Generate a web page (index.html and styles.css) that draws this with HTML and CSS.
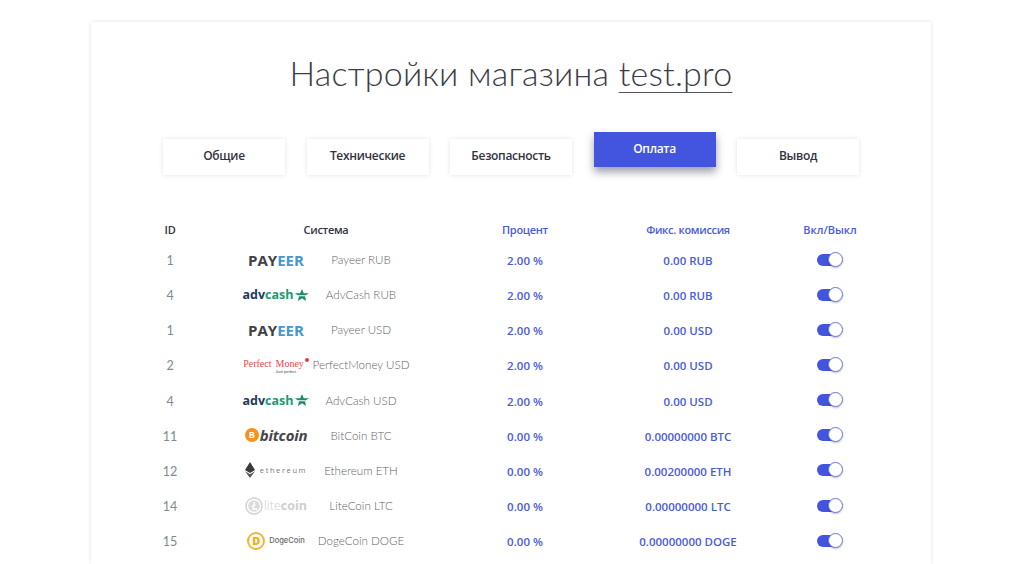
FILE: index.html
```html
<!DOCTYPE html>
<html lang="ru">
<head>
<meta charset="utf-8">
<title>Настройки магазина</title>
<link rel="stylesheet" href="styles.css">
</head>
<body>
<main class="card">
  <h1 class="title">Настройки магазина <a class="title-link">test.pro</a></h1>
  <nav class="tabs">
    <button class="tab">Общие</button>
    <button class="tab">Технические</button>
    <button class="tab">Безопасность</button>
    <button class="tab active">Оплата</button>
    <button class="tab">Вывод</button>
  </nav>
  <section class="table">
    <div class="row head">
      <div class="id-h">ID</div><div class="sys-h">Система</div><div class="blue">Процент</div><div class="blue">Фикс. комиссия</div><div class="blue light-h">Вкл/Выкл</div>
    </div>
    <div class="row">
      <div class="id">1</div>
      <div class="sys"><div class="logo payeer">PAY<span>EER</span></div><div class="name">Payeer RUB</div></div>
      <div class="val">2.00 %</div><div class="val">0.00 RUB</div><div class="sw"><span class="toggle"></span></div>
    </div>
    <div class="row">
      <div class="id">4</div>
      <div class="sys"><div class="logo adv">adv<span>cash</span><svg class="star" viewBox="0 0 14 12"><path d="M7 0l1.700 4.200H14l-3.200 2.100H2.600L0 4.200h5.200zM3.900 7.200h6.200L11 12 7 9.300 3 12z" fill="#1c8a6b"/></svg></div><div class="name">AdvCash RUB</div></div>
      <div class="val">2.00 %</div><div class="val">0.00 RUB</div><div class="sw"><span class="toggle"></span></div>
    </div>
    <div class="row">
      <div class="id">1</div>
      <div class="sys"><div class="logo payeer">PAY<span>EER</span></div><div class="name">Payeer USD</div></div>
      <div class="val">2.00 %</div><div class="val">0.00 USD</div><div class="sw"><span class="toggle"></span></div>
    </div>
    <div class="row">
      <div class="id">2</div>
      <div class="sys"><div class="logo pm"><span class="pm-word">Perfect</span><span class="pm-word">Money<small>Just perfect</small></span><i class="pm-dot"></i></div><div class="name">PerfectMoney USD</div></div>
      <div class="val">2.00 %</div><div class="val">0.00 USD</div><div class="sw"><span class="toggle"></span></div>
    </div>
    <div class="row">
      <div class="id">4</div>
      <div class="sys"><div class="logo adv">adv<span>cash</span><svg class="star" viewBox="0 0 14 12"><path d="M7 0l1.700 4.200H14l-3.200 2.100H2.600L0 4.200h5.200zM3.900 7.200h6.200L11 12 7 9.300 3 12z" fill="#1c8a6b"/></svg></div><div class="name">AdvCash USD</div></div>
      <div class="val">2.00 %</div><div class="val">0.00 USD</div><div class="sw"><span class="toggle"></span></div>
    </div>
    <div class="row">
      <div class="id">11</div>
      <div class="sys"><div class="logo btc"><span class="btc-icon">B</span><span class="btc-word">bitcoin</span></div><div class="name">BitCoin BTC</div></div>
      <div class="val">0.00 %</div><div class="val">0.00000000 BTC</div><div class="sw"><span class="toggle"></span></div>
    </div>
    <div class="row">
      <div class="id">12</div>
      <div class="sys"><div class="logo eth"><svg class="eth-icon" viewBox="0 0 10 16"><path d="M5 0L0 8l5 3 5-3z" fill="#3a3a3a"/><path d="M0 9.300l5 6.700 5-6.700-5 3z" fill="#555"/></svg><span>ethereum</span></div><div class="name">Ethereum ETH</div></div>
      <div class="val">0.00 %</div><div class="val">0.00200000 ETH</div><div class="sw"><span class="toggle"></span></div>
    </div>
    <div class="row">
      <div class="id">14</div>
      <div class="sys"><div class="logo ltc"><svg class="ltc-icon" viewBox="0 0 18 18"><circle cx="9" cy="9" r="8" fill="none" stroke="#d2d2d2" stroke-width="1.400"/><circle cx="9" cy="9" r="5.800" fill="#dcdcdc"/><path d="M9.500 5L8 12h4M6.500 9.500l4-1.500" fill="none" stroke="#fff" stroke-width="1.300"/></svg><span class="ltc-word">lite<b>coin</b></span></div><div class="name">LiteCoin LTC</div></div>
      <div class="val">0.00 %</div><div class="val">0.00000000 LTC</div><div class="sw"><span class="toggle"></span></div>
    </div>
    <div class="row">
      <div class="id">15</div>
      <div class="sys"><div class="logo doge"><span class="doge-icon">D</span><span class="doge-word">DogeCoin</span></div><div class="name">DogeCoin DOGE</div></div>
      <div class="val">0.00 %</div><div class="val">0.00000000 DOGE</div><div class="sw"><span class="toggle"></span></div>
    </div>
  </section>
</main>
</body>
</html>
```
FILE: styles.css
```css
html, body { margin: 0; padding: 0; height: 564px; overflow: hidden; background: #fff; }
body { font-family: "Lato", "Noto Sans", sans-serif; color: #3b3b46; }
.card {
  width: 840px; height: 542px; margin: 22px 0 0 91px;
  box-shadow: 0 0 4px rgba(0,0,0,.12);
  clip-path: inset(-6px -6px 0 -6px);
  box-sizing: border-box; padding-top: 27px; background: #fff;
}
.title {
  margin: 0; font-weight: 300; font-size: 34px; line-height: 48px; height: 48px;
  text-align: center; color: #3c3c46; letter-spacing: .2px;
}
.title-link { text-decoration: underline; text-decoration-thickness: 1px; text-underline-offset: 6px; text-decoration-skip-ink: none; text-decoration-color: #55555f; }
.tabs { display: flex; gap: 21.500px; margin: 42px 0 0 72px; height: 36px; }
.tab {
  width: 122px; height: 36px; border: 0; padding: 0 0 3px; background: #fff;
  box-shadow: 0 0 5px rgba(0,0,0,.11);
  font: 600 12px "Open Sans", sans-serif; letter-spacing: -.3px; color: #33333d;
}
.tab.active {
  background: #4355de; color: #fff; height: 35px; transform: translateY(-7px);
  padding-bottom: 2px;
  box-shadow: 0 5px 8px rgba(40,40,70,.45);
}
.table { margin: 40px 0 0 60px; width: 720px; }
.row {
  display: grid; grid-template-columns: 38px 274px 124px 202px 82px;
  height: 35.150px; align-items: center; text-align: center;
}
.head { height: 28px; font: 600 11px "Open Sans", sans-serif; letter-spacing: -.3px; color: #33333d; }
.head .blue { color: #4a5bdc; }
.head .light-h { letter-spacing: 0; }
.id { font-size: 12.500px; color: #7d8a90; font-family: "Lato", sans-serif; }
.sys { display: flex; justify-content: center; align-items: center; }
.logo { width: 70px; flex: none; display: flex; justify-content: center; align-items: center; white-space: nowrap; margin-bottom: 2px; }
.name { width: 100px; flex: none; font-size: 11.600px; font-weight: 300; color: #5f5f6a; margin-bottom: 2px; white-space: nowrap; }
.val { font: 600 11.500px "Open Sans", sans-serif; color: #4a5bdc; }
.sw { display: flex; justify-content: center; }
.toggle {
  position: relative; display: block; width: 25px; height: 12px; border-radius: 6px; background: #4355de; margin: 0 2px 2px 0;
}
.toggle::after {
  content: ""; position: absolute; right: -1px; top: -2px; width: 13px; height: 13px;
  background: #fff; border: 1px solid #6a78e0; border-radius: 50%;
  box-shadow: 0 1px 2px rgba(0,0,0,.25);
}
.payeer { font: 700 15px "Open Sans", sans-serif; color: #3f4145; }
.payeer span { color: #4597d3; }
.adv { font: 700 12.500px "Open Sans", sans-serif; color: #1d3a5c; }
.adv span { color: #1c9a70; }
.star { width: 14px; height: 12px; margin-left: 2px; flex: none; }
.pm { gap: 4px; font: 400 10px "Liberation Serif", serif; color: #e8474c; height: 18px; align-items: flex-start; padding-top: 2px; box-sizing: border-box; }
.pm-word { position: relative; line-height: 11px; }
.pm-word small { position: absolute; left: 0; top: 11px; font: 400 4px "Liberation Sans", sans-serif; color: #444; }
.pm-dot { display: block; width: 4px; height: 4px; border-radius: 50%; background: #e03c44; margin-left: -3px; }
.btc { gap: 1px; }
.btc-icon {
  width: 14px; height: 14px; flex: none; border-radius: 50%; background: #f7931a; color: #fff;
  font: 700 9px/14px "Open Sans", sans-serif; text-align: center;
}
.btc-word { font: italic 700 15px "Open Sans", sans-serif; color: #45454a; letter-spacing: -.2px; }
.eth { gap: 5px; }
.eth-icon { width: 10px; height: 16px; flex: none; }
.eth span { font: 400 7.500px "Open Sans", sans-serif; letter-spacing: 1.600px; color: #777; }
.ltc { gap: 1px; }
.ltc-icon { width: 18px; height: 18px; flex: none; }
.ltc-word { font: 300 12.500px "Open Sans", sans-serif; color: #cfcfcf; }
.ltc-word b { font-weight: 700; }
.doge { gap: 4px; }
.doge-icon {
  box-sizing: border-box; width: 18px; height: 18px; flex: none; border-radius: 50%; border: 2px solid #f5b52c;
  color: #f2ac1c; font: 800 11px/14px "Open Sans", sans-serif; text-align: center;
}
.doge-word { font: 500 7.500px "Inter", sans-serif; color: #666; }
```
